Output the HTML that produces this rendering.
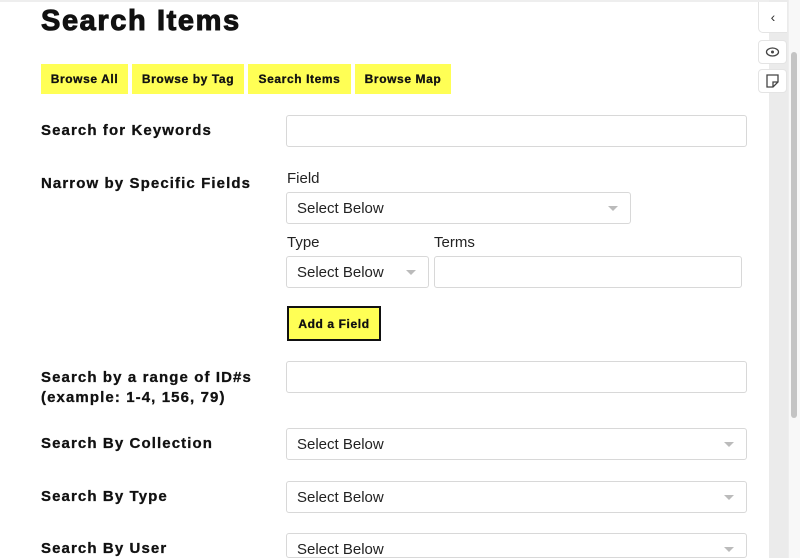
<!DOCTYPE html>
<html style="overflow:hidden;height:558px"><head><style>
body{margin:0;width:800px;height:558px;overflow:hidden;background:#fff;font-family:"Liberation Sans",sans-serif;position:relative;color:#111}
.a{position:absolute}
h1{position:absolute;left:41px;top:5px;margin:0;font-size:29px;font-weight:900;letter-spacing:1.6px;-webkit-text-stroke:1px #111}
.nb{position:absolute;top:64px;height:30px;background:#ffff55;font-weight:bold;font-size:12px;line-height:31px;text-align:center;letter-spacing:0.6px;-webkit-text-stroke:0.3px #111}
.lb{position:absolute;left:41px;font-weight:bold;font-size:15px;letter-spacing:1.1px;-webkit-text-stroke:0.3px #111;line-height:20px}
.in{position:absolute;border:1px solid #d8d8d8;border-radius:3px;background:#fff;box-sizing:border-box;font-size:15px;color:#222;padding-left:10px;line-height:31px}
.in.s:after{content:"";position:absolute;right:12px;top:13px;border:5px solid transparent;border-top:5px solid #bbb;border-bottom:0}
.sl{position:absolute;font-size:15px;color:#222}
</style></head><body>
<div class="a" style="left:0;top:0;width:800px;height:2px;background:#eee"></div>
<h1>Search Items</h1>
<div class="nb" style="left:41px;width:87px">Browse All</div>
<div class="nb" style="left:132px;width:112px">Browse by Tag</div>
<div class="nb" style="left:248px;width:103px">Search Items</div>
<div class="nb" style="left:355px;width:96px">Browse Map</div>

<div class="lb" style="top:121px">Search for Keywords</div>
<div class="in" style="left:286px;top:115px;width:461px;height:32px"></div>

<div class="lb" style="top:174px">Narrow by Specific Fields</div>
<div class="sl" style="left:287px;top:170px">Field</div>
<div class="in s" style="left:286px;top:192px;width:345px;height:32px">Select Below</div>
<div class="sl" style="left:287px;top:234px">Type</div>
<div class="sl" style="left:434px;top:234px">Terms</div>
<div class="in s" style="left:286px;top:256px;width:143px;height:32px">Select Below</div>
<div class="in" style="left:434px;top:256px;width:308px;height:32px"></div>
<div class="a" style="left:287px;top:306px;width:94px;height:35px;box-sizing:border-box;border:2px solid #111;background:#ffff55;font-weight:bold;font-size:12px;line-height:32px;text-align:center;letter-spacing:0.6px;-webkit-text-stroke:0.3px #111">Add a Field</div>

<div class="lb" style="top:368px">Search by a range of ID#s<br>(example: 1-4, 156, 79)</div>
<div class="in" style="left:286px;top:361px;width:461px;height:32px"></div>

<div class="lb" style="top:434px">Search By Collection</div>
<div class="in s" style="left:286px;top:428px;width:461px;height:32px">Select Below</div>
<div class="lb" style="top:487px">Search By Type</div>
<div class="in s" style="left:286px;top:481px;width:461px;height:32px">Select Below</div>
<div class="lb" style="top:539px">Search By User</div>
<div class="in s" style="left:286px;top:533px;width:461px;height:25px">Select Below</div>

<div class="a" style="left:769px;top:0;width:19px;height:558px;background:#ebebeb"></div>
<div class="a" style="left:788px;top:0;width:12px;height:558px;background:#f8f8f8;border-left:1px solid #eee"></div>
<div class="a" style="left:791px;top:52px;width:6px;height:366px;background:#c4c4c4;border-radius:3px"></div>
<div class="a" style="left:758px;top:2px;width:28px;height:30px;background:#fff;border:1px solid #e4e4e4;border-top:0;border-right:0;border-radius:0 0 0 5px;font-size:14px;line-height:30px;text-align:center;color:#333">‹</div>
<div class="a" style="left:758px;top:40px;width:27px;height:22px;background:#fff;border:1px solid #e4e4e4;border-radius:4px">
<svg width="27" height="22"><ellipse cx="13.5" cy="11" rx="6" ry="4" fill="none" stroke="#444" stroke-width="1.3"/><circle cx="13.5" cy="11" r="1.5" fill="#444"/></svg></div>
<div class="a" style="left:758px;top:69px;width:27px;height:22px;background:#fff;border:1px solid #e4e4e4;border-radius:4px">
<svg width="27" height="22"><path d="M8 5h11v7l-5 5H8z M19 12h-5v5" fill="none" stroke="#444" stroke-width="1.3"/></svg></div>
</body></html>
